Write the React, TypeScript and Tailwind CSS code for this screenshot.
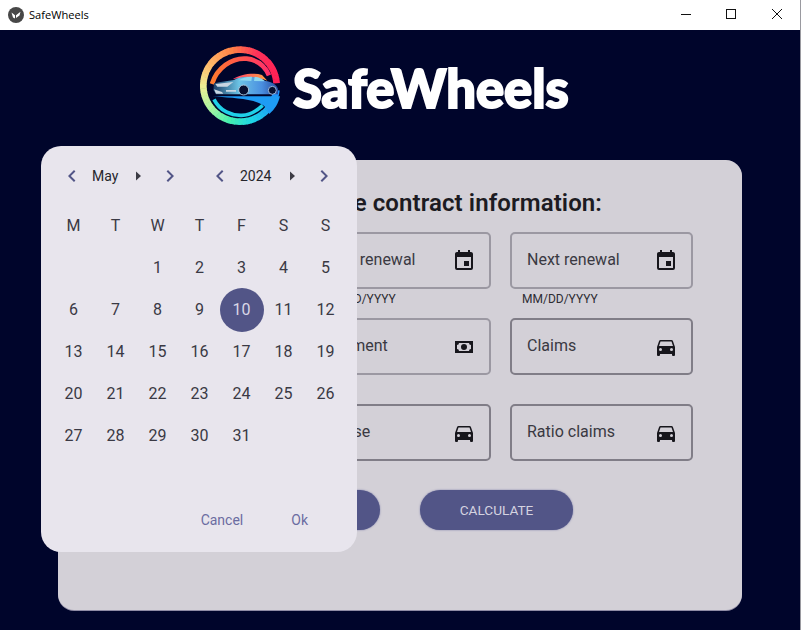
import type { ReactNode } from "react";

const mdiCalendar =
  "M19,19H5V8H19M16,1V3H8V1H6V3H5C3.89,3 3,3.89 3,5V19A2,2 0 0,0 5,21H19A2,2 0 0,0 21,19V5C21,3.89 20.1,3 19,3H18V1M17,12H12V17H17V12Z";
const mdiCar =
  "M5,11L6.5,6.5H17.5L19,11M17.5,16A1.5,1.5 0 0,1 16,14.5A1.5,1.5 0 0,1 17.5,13A1.5,1.5 0 0,1 19,14.5A1.5,1.5 0 0,1 17.5,16M6.5,16A1.5,1.5 0 0,1 5,14.5A1.5,1.5 0 0,1 6.5,13A1.5,1.5 0 0,1 8,14.5A1.5,1.5 0 0,1 6.5,16M18.92,6C18.72,5.42 18.16,5 17.5,5H6.5C5.84,5 5.28,5.42 5.08,6L3,12V20A1,1 0 0,0 4,21H5A1,1 0 0,0 6,20V19H18V20A1,1 0 0,0 19,21H20A1,1 0 0,0 21,20V12L18.92,6Z";
const mdiCash =
  "M3,6H21V18H3V6M12,9A3,3 0 0,1 15,12A3,3 0 0,1 12,15A3,3 0 0,1 9,12A3,3 0 0,1 12,9M7,8A2,2 0 0,1 5,10V14A2,2 0 0,1 7,16H17A2,2 0 0,1 19,14V10A2,2 0 0,1 17,8H7Z";

function Icon({ d, className }: { d: string; className?: string }) {
  return (
    <svg viewBox="0 0 24 24" width={24} height={24} className={className} fill="currentColor" fillRule="evenodd">
      <path d={d} />
    </svg>
  );
}

// colour stops round the logo ring, angle counted anticlockwise from the right
const ringStops: [number, number[]][] = [
  [0, [255, 30, 85]],
  [60, [255, 50, 90]],
  [100, [255, 130, 70]],
  [145, [255, 190, 110]],
  [180, [235, 240, 150]],
  [215, [170, 245, 160]],
  [250, [70, 240, 175]],
  [285, [30, 215, 230]],
  [320, [30, 160, 245]],
  [360, [30, 140, 255]],
];

function ringColor(angle: number) {
  for (let i = 1; i < ringStops.length; i++) {
    const [a0, c0] = ringStops[i - 1];
    const [a1, c1] = ringStops[i];
    if (angle <= a1) {
      const t = (angle - a0) / (a1 - a0);
      const c = c0.map((v, k) => Math.round(v + (c1[k] - v) * t));
      return `rgb(${c[0]},${c[1]},${c[2]})`;
    }
  }
  return "rgb(30,140,255)";
}

function LogoRing() {
  const segments = [];
  for (let a = 4; a < 350; a += 6) {
    const p = (deg: number) => {
      const r = (deg * Math.PI) / 180;
      return `${150 + 110 * Math.cos(r)} ${137 - 108 * Math.sin(r)}`;
    };
    segments.push(
      <path key={a} d={`M${p(a)}A110 108 0 0 0 ${p(a + 7)}`} stroke={ringColor(a)} strokeWidth={20} fill="none" />
    );
  }
  return <>{segments}</>;
}

function Logo() {
  return (
    <svg viewBox="0 0 300 270" width={100} height={90} className="shrink-0">
      <defs>
        <linearGradient id="inner" x1="0" x2="1" y1="0" y2="0">
          <stop offset="0" stopColor="#ff7a2e" />
          <stop offset="1" stopColor="#ff2f6a" />
        </linearGradient>
        <linearGradient id="body" x1="0" x2="1" y1="0" y2="0">
          <stop offset="0" stopColor="#1d3f66" />
          <stop offset="0.4" stopColor="#6cc4e6" />
          <stop offset="0.75" stopColor="#4a8fe0" />
          <stop offset="1" stopColor="#27489a" />
        </linearGradient>
        <linearGradient id="roof" x1="0" x2="1" y1="0" y2="0">
          <stop offset="0" stopColor="#ff3d6e" />
          <stop offset="1" stopColor="#ffa040" />
        </linearGradient>
      </defs>
      <LogoRing />
      <path d="M66 132C80 85 125 52 170 56C205 60 226 80 237 106" stroke="url(#inner)" strokeWidth={14} fill="none" />
      <path d="M72 178C90 214 125 227 155 226C180 225 200 213 218 196" stroke="#1fd0e8" strokeWidth={11} fill="none" />
      <path d="M66 169H270C265 190 255 208 238 222C232 200 215 190 190 183C150 174 105 172 66 169Z" fill="#1e9cf5" />
      <path d="M128 118C150 103 190 97 216 105L232 122C195 110 160 110 128 118Z" fill="url(#roof)" />
      <path
        d="M72 130C92 125 112 123 132 120C152 108 198 106 226 123C242 125 258 131 264 146L264 163H78L70 150Z"
        fill="url(#body)"
      />
      <path d="M146 121C158 112 176 110 186 110L184 123Z M194 110C208 111 218 116 224 124L192 123Z" fill="#8ed8ee" />
      <path d="M76 132L130 126L112 140L82 140Z M72 148L96 156L100 161H78Z M108 150H138V155H108Z" fill="#c9d6e2" />
      <circle cx="161" cy="150" r="15" fill="#07102f" stroke="#a9c6dc" strokeWidth={3} />
      <circle cx="247" cy="151" r="12" fill="#07102f" stroke="#9fbbe0" strokeWidth={3} />
    </svg>
  );
}

function TitleBar() {
  return (
    <div className="flex h-[30px] items-center bg-white">
      <svg viewBox="0 0 16 16" width={16} height={16} className="ml-2">
        <circle cx="8" cy="8" r="8" fill="#474747" />
        <path d="M3.5 5.5L7 8.2V11.5L5 10.5ZM8 8.2L12.5 4.8L11.5 8.5L8 11Z" fill="#fff" />
      </svg>
      <span className="ml-[5px] font-['Open_Sans',sans-serif] text-[11.1px] text-black">SafeWheels</span>
      <svg width={140} height={30} viewBox="0 0 140 30" className="ml-auto" fill="none" stroke="#111" strokeWidth={1}>
        <path d="M21 14.5H31" />
        <rect x="66.5" y="9.5" width="9" height="9" />
        <path d="M112 9L122 19M122 9L112 19" />
      </svg>
    </div>
  );
}

function Field({
  label,
  icon,
  dark,
  helper,
}: {
  label: string;
  icon: string;
  dark?: boolean;
  helper?: boolean;
}) {
  return (
    <div className="relative">
      <div
        className={`flex h-[57px] items-center justify-between rounded-[5px] border-2 pl-[15px] pr-[13px] ${
          dark ? "border-[#807d87]" : "border-[#9b98a2]"
        }`}
      >
        <span className="-mt-[2px] text-base text-[#3a3942]">{label}</span>
        <Icon d={icon} className="text-[#17161c]" />
      </div>
      {helper && <p className="absolute left-3 top-[59px] text-xs text-[#2d2c33]">MM/DD/YYYY</p>}
    </div>
  );
}

function MonthArrow({ d }: { d: string }) {
  return (
    <svg viewBox="0 0 24 24" width={24} height={24} fill="#525587">
      <path d={d} />
    </svg>
  );
}

const chevronLeft = "M15.41,16.58L10.83,12L15.41,7.41L14,6L8,12L14,18L15.41,16.58Z";
const chevronRight = "M8.59,16.58L13.17,12L8.59,7.41L10,6L16,12L10,18L8.59,16.58Z";

function Spinner({ children, width }: { children: ReactNode; width: string }) {
  return (
    <div className="flex items-center">
      <MonthArrow d={chevronLeft} />
      <span className={`ml-2 text-sm text-[#26252c] ${width}`}>{children}</span>
      <svg viewBox="0 0 24 24" width={24} height={24} fill="#3c3b44">
        <path d="M10 7.5L15 12L10 16.5Z" />
      </svg>
      <div className="ml-2">
        <MonthArrow d={chevronRight} />
      </div>
    </div>
  );
}

const weeks: (number | null)[][] = [
  [null, null, 1, 2, 3, 4, 5],
  [6, 7, 8, 9, 10, 11, 12],
  [13, 14, 15, 16, 17, 18, 19],
  [20, 21, 22, 23, 24, 25, 26],
  [27, 28, 29, 30, 31, null, null],
];

function DatePicker() {
  return (
    <div className="absolute left-[41px] top-[146px] flex h-[406px] w-[316px] flex-col rounded-[20px] bg-[#e8e5ed] px-[11px] pt-[18px]">
      <div className="flex gap-[26px] pl-2">
        <Spinner width="w-[34px]">May</Spinner>
        <Spinner width="w-10">2024</Spinner>
      </div>
      <div className="ml-[0.5px] mt-[17px] grid grid-cols-[repeat(7,42px)] text-base text-[#3a3944]">
        {["M", "T", "W", "T", "F", "S", "S"].map((d, i) => (
          <div key={i} className="flex h-[42px] items-center justify-center">
            {d}
          </div>
        ))}
        {weeks.flat().map((d, i) => (
          <div key={i} className="flex h-[42px] items-center justify-center">
            {d === 10 ? (
              <span className="flex h-11 w-11 shrink-0 items-center justify-center rounded-full bg-[#525587] text-[#d9d7e6]">
                {d}
              </span>
            ) : (
              d
            )}
          </div>
        ))}
      </div>
      <div className="mt-auto flex justify-end gap-12 pb-[22px] pr-[38px] text-sm text-[#6b6ca1]">
        <span>Cancel</span>
        <span>Ok</span>
      </div>
    </div>
  );
}

export default function App() {
  return (
    <div className="relative h-[630px] w-[801px] overflow-hidden border-r border-[#9a9aa0] bg-[#00052b] font-['Roboto',sans-serif]">
      <TitleBar />
      <div className="flex h-[130px] items-start pl-[190px] pt-[10px]">
        <Logo />
        <span className="ml-[3px] mt-[13px] font-['Lato',sans-serif] text-[52.5px] font-black leading-[70px] text-white [-webkit-text-stroke:2px_white]">
          SafeWheels
        </span>
      </div>
      <div className="ml-[58px] h-[450px] w-[684px] rounded-2xl bg-[#d3d0d7] shadow-[0_1px_0_#8f8ca5]">
        <h1 className="mr-[140px] pt-[27px] text-right text-2xl font-semibold tracking-[0.1px] text-[#1c1b22]">
          Enter the contract information:
        </h1>
        <div className="mt-[13px] grid grid-cols-[183px_183px] justify-start gap-x-[19px] gap-y-[29px] pl-[250px]">
          <Field label="Last renewal" icon={mdiCalendar} helper />
          <Field label="Next renewal" icon={mdiCalendar} helper />
          <Field label="Payment" icon={mdiCash} />
          <Field label="Claims" icon={mdiCar} dark />
          <Field label="Cruise" icon={mdiCar} dark />
          <Field label="Ratio claims" icon={mdiCar} dark />
        </div>
        <div className="mt-[29px] flex justify-center gap-10">
          <div className="h-10 w-[153px] rounded-[20px] bg-[#525587] shadow-[0_0_2px_#7a7ca8]" />
          <button className="h-10 w-[153px] rounded-[20px] bg-[#525587] text-[13.6px] text-[#d5d3e0] shadow-[0_0_2px_#7a7ca8]">
            CALCULATE
          </button>
        </div>
      </div>
      <DatePicker />
    </div>
  );
}
